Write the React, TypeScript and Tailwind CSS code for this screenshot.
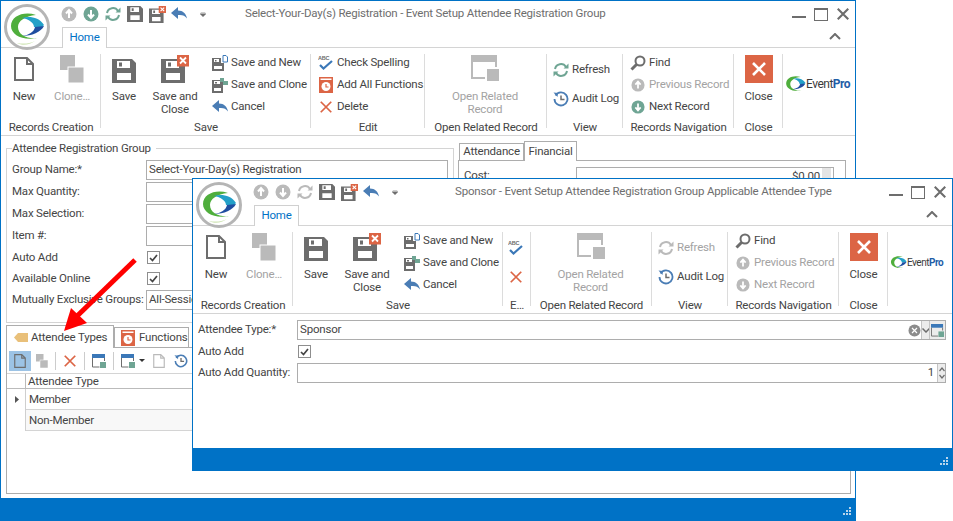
import type { ReactNode } from "react";

const GRAY = "#6d6d6d";
const OFF = "#bababa";
const GREEN = "#6fa594";
const BLUE = "#4a7db5";
const RED = "#dc6545";

function Logo({ size = 48 }: { size?: number }) {
  return (
    <svg width={size} height={size} viewBox="0 0 48 48">
      <circle cx="24" cy="24" r="21.5" fill="#fff" stroke="#b5b5b5" strokeWidth="3" />
      <Swoosh />
    </svg>
  );
}

function Swoosh() {
  return (
    <g>
      <path d="M33 12C21 8 8 13 8 23c0 9 12 15 26 12-10 1-19-3-19-11 0-6 7-11 18-12z" fill="#4fae3c" />
      <path d="M19 15c7-2 17-1 22 7l-2 2H31c0-4-5-8-12-9z" fill="#23a0c8" />
      <path d="M41 23c-3 6-12 10-22 10 7-1 12-4 13-9z" fill="#1f4ea0" />
      <path d="M14 40c6 1 12 1 18-2-5 4-13 5-18 2z" fill="#cfe5b5" />
    </g>
  );
}

function Doc({ s = 24, c = GRAY }: { s?: number; c?: string }) {
  return (
    <svg width={s} height={s} viewBox="0 0 24 24" fill="none" stroke={c} strokeWidth="2">
      <path d="M3 1h12l6 6v16H3zM15 1v6h6" />
    </svg>
  );
}

function Clone({ s = 24 }: { s?: number }) {
  return (
    <svg width={s} height={(s * 28) / 24} viewBox="0 0 24 28" fill={OFF}>
      <rect x="0" y="0" width="15" height="15" />
      <rect x="8" y="12" width="16" height="16" stroke="#fff" strokeWidth="1" />
    </svg>
  );
}

const FLOPPY = "M0 0h20l4 4v20H0zM5 2h13v7H5zM7 3.500h3v4H7zM5 14h14v7H5z";

function Floppy({ s = 24, c = GRAY }: { s?: number; c?: string }) {
  return (
    <svg width={s} height={s} viewBox="0 0 24 24" className="shrink-0">
      <path fillRule="evenodd" fill={c} d={FLOPPY} />
    </svg>
  );
}

function FloppyX({ s = 28 }: { s?: number }) {
  return (
    <svg width={s} height={s} viewBox="0 0 28 28">
      <g transform="translate(0 4)">
        <path fillRule="evenodd" fill={GRAY} d={FLOPPY} />
      </g>
      <rect x="16" y="0" width="12" height="11.500" fill={RED} />
      <path d="M19 2.500l6 6M25 2.500l-6 6" stroke="#fff" strokeWidth="1.800" />
    </svg>
  );
}

function Circle({ up, c, s = 16 }: { up?: boolean; c: string; s?: number }) {
  return (
    <svg width={s} height={s} viewBox="0 0 16 16" className="shrink-0">
      <circle cx="8" cy="8" r="7.500" fill={c} />
      <path d={up ? "M8 12V5M5 7.500L8 4l3 3.500" : "M8 4v7M5 8.500L8 12l3-3.500"} stroke="#fff" strokeWidth="2" fill="none" />
    </svg>
  );
}

function Refresh({ c = GREEN, s = 16 }: { c?: string; s?: number }) {
  return (
    <svg width={s} height={s} viewBox="0 0 16 16" fill="none" stroke={c} strokeWidth="2" className="shrink-0">
      <path d="M2 7a6 6 0 0 1 11-2M14 9a6 6 0 0 1-11 2" />
      <path d="M15.500 1.500v5h-5zM.5 14.500v-5h5z" fill={c} stroke="none" />
    </svg>
  );
}

function Back({ s = 16 }: { s?: number }) {
  return (
    <svg width={s} height={s} viewBox="0 0 16 16" className="shrink-0">
      <path d="M0 7l7-6v3.500c5 0 8 3 9 8-2-3-5-4-9-3.500V13z" fill={BLUE} />
    </svg>
  );
}

function Audit({ s = 16 }: { s?: number }) {
  return (
    <svg width={s} height={s} viewBox="0 0 16 16" fill="none" stroke={BLUE} strokeWidth="1.800" className="shrink-0">
      <path d="M2.500 4.500A6.500 6.500 0 1 1 1.500 8" />
      <path d="M.5 1.500l4.500.5-.5 4z" fill={BLUE} stroke="none" />
      <path d="M8 4.500V8.500h3.500" stroke={GRAY} strokeWidth="1.500" />
    </svg>
  );
}

function Cross({ s = 16, c = RED, w = 2 }: { s?: number; c?: string; w?: number }) {
  return (
    <svg width={s} height={s} viewBox="0 0 16 16" className="shrink-0">
      <path d="M2 2l12 12M14 2L2 14" stroke={c} strokeWidth={w} />
    </svg>
  );
}

function Spell() {
  return (
    <svg width={16} height={16} viewBox="0 0 16 16" className="shrink-0">
      <text x="0" y="5" fontSize="5.500" fontWeight="700" fill={GRAY} fontFamily="Liberation Sans, sans-serif">ABC</text>
      <path d="M2 10l3.500 3.500L14 6" stroke="#3b78b8" strokeWidth="2.200" fill="none" />
    </svg>
  );
}

function Clock() {
  return (
    <svg width={14} height={16} viewBox="0 0 14 16" className="shrink-0">
      <rect x="0" y="0" width="14" height="16" fill={RED} />
      <rect x="1.500" y="1.500" width="11" height="1.500" fill="#fff" />
      <circle cx="7" cy="9.500" r="4.500" fill="#fff" />
      <path d="M7 7v3h2.500" stroke={RED} strokeWidth="1.200" fill="none" />
    </svg>
  );
}

function Find() {
  return (
    <svg width={16} height={16} viewBox="0 0 16 16" fill="none" className="shrink-0">
      <circle cx="10" cy="6" r="4.500" stroke={GRAY} strokeWidth="2" />
      <path d="M6.500 9.500L1.500 14.500" stroke={GRAY} strokeWidth="3" />
    </svg>
  );
}

function SaveNew() {
  return (
    <svg width={16} height={16} viewBox="0 0 16 16" className="shrink-0">
      <path fillRule="evenodd" fill={GRAY} d="M0 3h9v5h3v8H0zM2 4v3h5V4zM3 5h1.500v1.500H3zM2 11v3h8v-3z" />
      <path d="M11 .5h3l1.500 1.500v5H11z" fill="#fff" stroke="#3b78b8" />
    </svg>
  );
}

function SaveClone() {
  return (
    <svg width={16} height={16} viewBox="0 0 16 16" className="shrink-0">
      <path fillRule="evenodd" fill={GRAY} d="M0 3h11v13H0zM2 4v3h6V4zM3 5h2v1.500H3zM2 11v3h7v-3z" />
      <path d="M8 1h4v3h4v4h-5V5H8z" fill={GREEN} />
    </svg>
  );
}

function Related({ c = OFF, s = 28 }: { c?: string; s?: number }) {
  return (
    <svg width={s} height={s} viewBox="0 0 28 28" className="shrink-0">
      <rect x="0" y="0" width="26" height="7" fill={c} />
      <path d="M1 7v16h13" fill="none" stroke={c} strokeWidth="2" />
      <path d="M25 7v5" stroke={c} strokeWidth="2" />
      <rect x="16" y="14" width="12" height="12" fill={c} />
    </svg>
  );
}

function RelatedSmall({ s = 14 }: { s?: number }) {
  return (
    <svg width={s} height={s} viewBox="0 0 14 14" className="shrink-0">
      <rect x="0" y="0" width="13" height="4" fill="#3b78b8" />
      <path d="M.5 4v9h7M12.500 4v3" stroke={GRAY} fill="none" />
      <rect x="8" y="8" width="6" height="6" fill={GREEN} />
    </svg>
  );
}

function EventPro({ small }: { small?: boolean }) {
  return (
    <div className="flex items-center">
      <svg width={small ? 17 : 21} height={small ? 15 : 18} viewBox="6 9 36 30">
        <Swoosh />
      </svg>
      <span className={`${small ? "text-[10px]" : "text-[12px]"} tracking-[-0.5px] text-[#3a3a3a]`}>
        Event<span className="font-bold text-[#1f5ea8]">Pro</span>
      </span>
    </div>
  );
}

function Big({ w, icon, label, off }: { w: number; icon: ReactNode; label: ReactNode; off?: boolean }) {
  return (
    <div className="flex flex-col items-center" style={{ width: w }}>
      <div className="flex h-[31px] items-end justify-center">{icon}</div>
      <div className={`mt-[7px] text-center leading-[13px] ${off ? "text-[#a3a3a3]" : ""}`}>{label}</div>
    </div>
  );
}

function Small({ icon, label, off }: { icon: ReactNode; label: string; off?: boolean }) {
  return (
    <div className="flex h-[22px] items-center gap-[3px] whitespace-nowrap">
      <span className="flex w-[16px] justify-center">{icon}</span>
      <span className={off ? "text-[#a3a3a3]" : ""}>{label}</span>
    </div>
  );
}

function Group({ w, label, children, last }: { w: number; label: string; children?: ReactNode; last?: boolean }) {
  return (
    <div className="relative flex shrink-0 flex-col" style={{ width: w }}>
      <div className="flex h-[70px] flex-1 pt-[4px]">{children}</div>
      <div className="h-[15px] text-center leading-[14px] whitespace-nowrap">{label}</div>
      {!last && <div className="absolute top-[6px] right-0 h-[74px] w-px bg-[#dcdcdc]" />}
    </div>
  );
}

function TitleBar({ title, titleLeft, sub }: { title: string; titleLeft: number; sub?: boolean }) {
  return (
    <div className="flex h-[26px] items-center">
      <div className="ml-[60px] flex items-center gap-[6px]">
        <Circle up c={OFF} />
        <Circle c={sub ? OFF : GREEN} />
        <Refresh c={sub ? OFF : GREEN} />
        <Floppy s={16} />
        <div className="w-[16px]">
          <FloppyX s={17} />
        </div>
        <Back />
        <svg width={6} height={5} viewBox="0 0 8 6" className="ml-[7px]">
          <path d="M1 0h6M0 2h8l-4 4z" fill={GRAY} stroke={GRAY} strokeWidth=".6" />
        </svg>
      </div>
      <div className="whitespace-nowrap text-[#6e6e6e]" style={{ marginLeft: titleLeft }}>
        {title}
      </div>
      <div className="mr-[5px] ml-auto flex items-center gap-[8px]">
        <div className="mt-[5px] h-[2px] w-[14px] bg-[#6d6d6d]" />
        <div className="h-[13px] w-[14px] border border-t-[2px] border-[#6d6d6d]" />
        <Cross s={14} c={GRAY} w={2.4} />
      </div>
    </div>
  );
}

function HomeTab() {
  return (
    <div className="flex h-[20px] items-start justify-between">
      <div className="relative z-10 ml-[61px] flex h-[21px] w-[45px] items-center justify-center border border-b-0 border-[#d0d0d0] bg-white text-[#0072c6]">
        Home
      </div>
      <svg width={12} height={7} viewBox="0 0 12 7" className="mt-[6px] mr-[14px]">
        <path d="M1 6l5-5 5 5" stroke={GRAY} strokeWidth="2" fill="none" />
      </svg>
    </div>
  );
}

function SmallCol({ ml, children }: { ml: number; children: ReactNode }) {
  return (
    <div className="flex flex-col" style={{ marginLeft: ml }}>
      {children}
    </div>
  );
}

function CloseBtn() {
  return (
    <Big
      w={49}
      icon={
        <div className="flex h-[28px] w-[28px] items-center justify-center bg-[#dc6545]">
          <Cross s={16} c="#fff" w={2.6} />
        </div>
      }
      label="Close"
    />
  );
}

function Records() {
  return (
    <Group w={100} label="Records Creation">
      <Big w={46} icon={<div className="mb-[2px]"><Doc /></div>} label="New" />
      <Big w={50} icon={<Clone />} label="Clone…" off />
    </Group>
  );
}

function SaveGroup() {
  return (
    <Group w={210} label="Save">
      <Big w={46} icon={<Floppy s={24} />} label="Save" />
      <Big w={56} icon={<FloppyX />} label={<>Save and<br />Close</>} />
      <SmallCol ml={9}>
        <Small icon={<SaveNew />} label="Save and New" />
        <Small icon={<SaveClone />} label="Save and Clone" />
        <Small icon={<Back />} label="Cancel" />
      </SmallCol>
    </Group>
  );
}

function MainRibbon() {
  return (
    <div className="flex h-[89px] border-y border-[#d4d4d4]">
      <Records />
      <SaveGroup />
      <Group w={114} label="Edit">
        <SmallCol ml={7}>
          <Small icon={<Spell />} label="Check Spelling" />
          <Small icon={<Clock />} label="Add All Functions" />
          <Small icon={<Cross s={14} />} label="Delete" />
        </SmallCol>
      </Group>
      <Group w={122} label="Open Related Record">
        <Big w={120} icon={<Related />} label={<>Open Related<br />Record</>} off />
      </Group>
      <Group w={76} label="View">
        <SmallCol ml={6}>
          <div className="h-[7px]" />
          <Small icon={<Refresh />} label="Refresh" />
          <div className="h-[7px]" />
          <Small icon={<Audit />} label="Audit Log" />
        </SmallCol>
      </Group>
      <Group w={111} label="Records Navigation">
        <SmallCol ml={7}>
          <Small icon={<Find />} label="Find" />
          <Small icon={<Circle up c={OFF} s={14} />} label="Previous Record" off />
          <Small icon={<Circle c={GREEN} s={14} />} label="Next Record" />
        </SmallCol>
      </Group>
      <Group w={49} label="Close">
        <CloseBtn />
      </Group>
      <Group w={71} label="" last>
        <div className="flex h-[64px] w-full items-center pl-[2px]">
          <EventPro />
        </div>
      </Group>
    </div>
  );
}

function SubRibbon() {
  return (
    <div className="flex h-[89px] border-y border-[#d4d4d4]">
      <Records />
      <SaveGroup />
      <Group w={28} label="E…">
        <SmallCol ml={5}>
          <div className="h-[7px]" />
          <Small icon={<Spell />} label="" />
          <div className="h-[7px]" />
          <Small icon={<Cross s={14} />} label="" />
        </SmallCol>
      </Group>
      <Group w={121} label="Open Related Record">
        <Big w={119} icon={<Related />} label={<>Open Related<br />Record</>} off />
      </Group>
      <Group w={76} label="View">
        <SmallCol ml={6}>
          <div className="h-[7px]" />
          <Small icon={<Refresh c={OFF} />} label="Refresh" off />
          <div className="h-[7px]" />
          <Small icon={<Audit />} label="Audit Log" />
        </SmallCol>
      </Group>
      <Group w={111} label="Records Navigation">
        <SmallCol ml={7}>
          <Small icon={<Find />} label="Find" />
          <Small icon={<Circle up c={OFF} s={14} />} label="Previous Record" off />
          <Small icon={<Circle c={OFF} s={14} />} label="Next Record" off />
        </SmallCol>
      </Group>
      <Group w={49} label="Close">
        <CloseBtn />
      </Group>
      <Group w={64} label="" last>
        <div className="flex h-[64px] w-full items-center pl-[2px]">
          <EventPro small />
        </div>
      </Group>
    </div>
  );
}

function Input({ value }: { value?: string }) {
  return (
    <div className="flex h-[20px] items-center overflow-hidden border border-[#adadad] bg-white pl-[2px] whitespace-nowrap">
      {value}
    </div>
  );
}

function Check() {
  return (
    <div className="ml-[1px] flex h-[13px] w-[13px] items-center justify-center border border-[#8e8e8e] bg-white">
      <svg width={9} height={8} viewBox="0 0 9 8">
        <path d="M1 4l2.500 2.500L8 1" stroke="#444" strokeWidth="1.700" fill="none" />
      </svg>
    </div>
  );
}

function Field({ label, children }: { label: string; children: ReactNode }) {
  return (
    <>
      <div className="flex items-center whitespace-nowrap">{label}</div>
      <div className="flex items-center">{children}</div>
    </>
  );
}

function GroupForm() {
  return (
    <fieldset className="h-[182px] w-[447px] border border-[#d4d4d4] px-[5px]">
      <legend className="mb-[5px] pr-[5px] leading-[14px]">Attendee Registration Group</legend>
      <div className="grid grid-cols-[134px_302px] gap-y-[2px]">
        <Field label="Group Name:*"><div className="w-full"><Input value="Select-Your-Day(s) Registration" /></div></Field>
        <Field label="Max Quantity:"><div className="w-full"><Input /></div></Field>
        <Field label="Max Selection:"><div className="w-full"><Input /></div></Field>
        <Field label="Item #:"><div className="w-full"><Input /></div></Field>
        <Field label="Auto Add"><div className="flex h-[19px] items-center"><Check /></div></Field>
        <Field label="Available Online"><div className="flex h-[19px] items-center"><Check /></div></Field>
        <Field label="Mutually Exclusive Groups:"><div className="w-full"><Input value="All-Sessions" /></div></Field>
      </div>
    </fieldset>
  );
}

function FinancialPane() {
  return (
    <div className="ml-[4px] w-[388px]">
      <div className="flex h-[19px] items-end pl-[1px]">
        <div className="flex h-[17px] w-[65px] items-center justify-center border border-b-0 border-[#adadad]">Attendance</div>
        <div className="relative -mb-px flex h-[20px] w-[53px] items-center justify-center border border-b-0 border-[#adadad] bg-white">Financial</div>
      </div>
      <div className="flex h-[60px] items-start border border-[#adadad] pt-[6px] pl-[5px]">
        <div className="w-[112px]">Cost:</div>
        <div className="flex h-[20px] w-[258px] items-center justify-end border border-[#adadad] pr-[2px]">
          $0.00
          <div className="ml-[2px] h-full w-[9px] bg-[#e4e4e4]" />
        </div>
      </div>
    </div>
  );
}

function TypesPane() {
  return (
    <div className="ml-[5px] w-[845px]">
      <div className="flex h-[21px] items-end">
        <div className="relative -mb-px flex h-[23px] w-[108px] items-center gap-[3px] whitespace-nowrap border border-b-0 border-[#adadad] bg-white pt-[1px] pl-[7px]">
          <svg width={14} height={9} viewBox="0 0 14 9"><path d="M4 0h10v9H4L0 4.500z" fill="#e9c07a" /></svg>
          Attendee Types
        </div>
        <div className="flex h-[20px] w-[75px] items-center gap-[4px] whitespace-nowrap border border-b-0 border-[#adadad] pl-[6px]">
          <Clock />
          Functions
        </div>
      </div>
      <div className="h-[147px] border border-[#adadad]">
        <div className="flex h-[26px] items-center border-b border-[#d4d4d4] pl-[2px]">
          <div className="flex h-[20px] w-[22px] items-center justify-center bg-[#9cc3e5]"><Doc s={14} /></div>
          <div className="ml-[5px]"><Clone s={12} /></div>
          <div className="mx-[7px] h-[18px] w-px bg-[#cccccc]" />
          <Cross s={14} />
          <div className="mx-[7px] h-[18px] w-px bg-[#cccccc]" />
          <RelatedSmall />
          <div className="mx-[7px] h-[18px] w-px bg-[#cccccc]" />
          <RelatedSmall />
          <svg width={6} height={3} viewBox="0 0 6 3" className="ml-[4px]"><path d="M0 0h6L3 3z" fill="#333" /></svg>
          <div className="ml-[7px]"><Doc s={14} c={OFF} /></div>
          <div className="ml-[8px]"><Audit s={14} /></div>
        </div>
        <div className="grid grid-cols-[19px_1fr]">
          <div className="h-[15px] border-r border-b border-[#bbbbbb]" />
          <div className="h-[15px] border-b border-[#bbbbbb] pl-[2px] leading-[14px]">Attendee Type</div>
          <div className="flex h-[21px] items-center justify-end border-r border-[#cfcfcf] pr-[6px]">
            <svg width={4} height={7} viewBox="0 0 4 7"><path d="M0 0l4 3.500L0 7z" fill="#555" /></svg>
          </div>
          <div className="flex h-[21px] items-center border-b border-[#d4d4d4] pt-[1px] pl-[3px]">Member</div>
          <div className="h-[21px] border-r border-[#cfcfcf]" />
          <div className="flex h-[21px] items-center border-b border-[#d4d4d4] bg-[#f8f8f8] pt-[1px] pl-[3px]">Non-Member</div>
        </div>
      </div>
    </div>
  );
}

function SubForm() {
  return (
    <div className="grid grid-cols-[99px_649px] gap-y-[2px] pt-[6px] pl-[5px]">
      <Field label="Attendee Type:*">
        <div className="flex h-[20px] w-full items-center border border-[#adadad] pl-[2px]">
          Sponsor
          <div className="ml-auto flex h-full items-center">
            <svg width={13} height={13} viewBox="0 0 13 13">
              <circle cx="6.500" cy="6.500" r="6" fill="#8c8c8c" />
              <path d="M4 4l5 5M9 4l-5 5" stroke="#fff" strokeWidth="1.200" />
            </svg>
            <div className="flex h-full w-[8px] items-center justify-center border-l border-[#c4c4c4] bg-[#ececec]">
              <svg width={8} height={5} viewBox="0 0 8 5" className="shrink-0"><path d="M.5.5L4 4 7.500.5" stroke={GRAY} strokeWidth="1.500" fill="none" /></svg>
            </div>
            <div className="flex h-full w-[16px] items-center justify-center border-l border-[#c4c4c4] bg-[#ececec]">
              <RelatedSmall s={13} />
            </div>
          </div>
        </div>
      </Field>
      <Field label="Auto Add"><div className="flex h-[19px] items-center"><Check /></div></Field>
      <Field label="Auto Add Quantity:">
        <div className="flex h-[20px] w-full items-center justify-end border border-[#adadad]">
          1
          <div className="ml-[3px] flex h-full w-[8px] flex-col items-center justify-center border-l border-[#c4c4c4] bg-[#ececec]">
            <svg width={6} height={14} viewBox="0 0 6 14" className="shrink-0"><path d="M.5 5L3 2l2.500 3M.5 9L3 12l2.500-3" stroke={GRAY} strokeWidth="1.200" fill="none" /></svg>
          </div>
        </div>
      </Field>
    </div>
  );
}

function Grip() {
  return (
    <svg width={10} height={10} viewBox="0 0 10 10" className="absolute right-[3px] bottom-[3px]">
      <path d="M7 0h2v2H7zM4 3h2v2H4zM7 3h2v2H7zM1 6h2v2H1zM4 6h2v2H4zM7 6h2v2H7z" fill="#b9d5ec" />
    </svg>
  );
}

function ArrowOverlay() {
  return (
    <svg width={90} height={90} viewBox="0 0 90 90" className="absolute top-[250px] left-[55px] z-10">
      <path d="M79 9L18 68" stroke="#ff0000" strokeWidth="5" />
      <path d="M8 80l7-23 16 15z" fill="#ff0000" />
    </svg>
  );
}

export default function App() {
  return (
    <div className="relative h-[521px] w-[953px] overflow-hidden bg-white font-['Roboto',sans-serif] text-[11.5px] tracking-[-0.2px] text-[#454545]">
      {/* Main window */}
      <div className="absolute top-0 left-0 flex h-[521px] w-[856px] flex-col border border-[#0072c6]">
        <div className="absolute top-[2px] left-[2px] z-10"><Logo /></div>
        <TitleBar title="Select-Your-Day(s) Registration - Event Setup Attendee Registration Group" titleLeft={39} />
        <HomeTab />
        <MainRibbon />
        <div className="flex h-[190px] pt-[5px] pl-[5px]">
          <GroupForm />
          <FinancialPane />
        </div>
        <TypesPane />
        <div className="relative mt-auto h-[22px] bg-[#0072c6]"><Grip /></div>
        <ArrowOverlay />
      </div>

      {/* Applicable attendee type window */}
      <div className="absolute top-[178px] left-[192px] z-20 flex h-[293px] w-[761px] flex-col border border-[#0072c6] bg-white">
        <div className="absolute top-[2px] left-[2px] z-10"><Logo /></div>
        <TitleBar title="Sponsor - Event Setup Attendee Registration Group Applicable Attendee Type" titleLeft={57} sub />
        <HomeTab />
        <SubRibbon />
        <SubForm />
        <div className="relative mt-auto h-[22px] bg-[#0072c6]"><Grip /></div>
      </div>
    </div>
  );
}
